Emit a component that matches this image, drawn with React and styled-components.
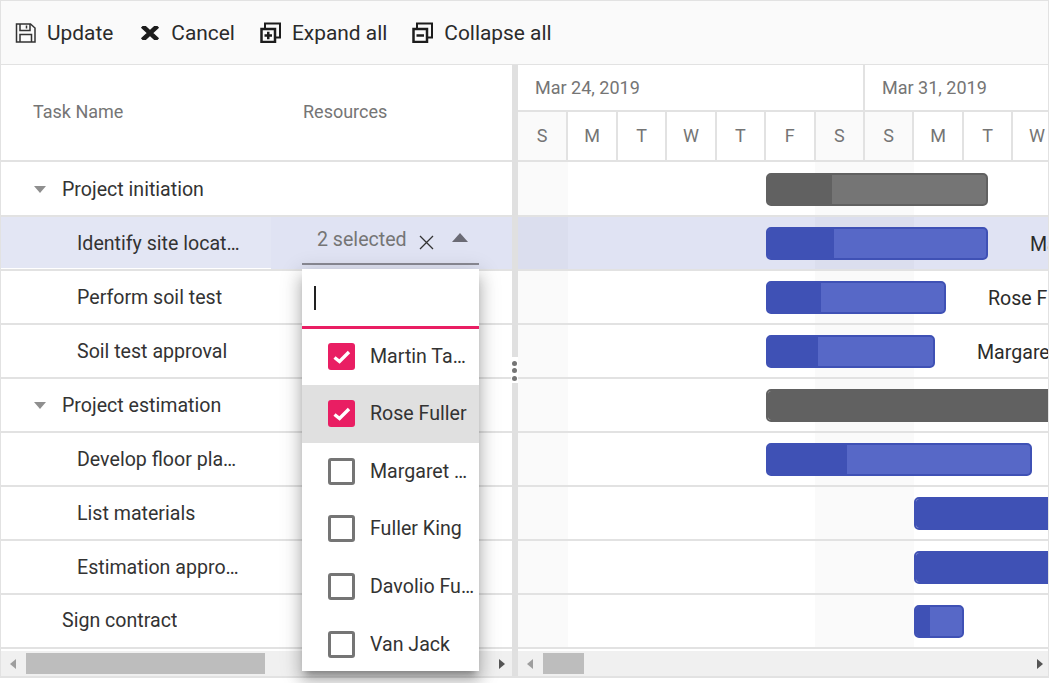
import React from 'react';
import styled, { createGlobalStyle } from 'styled-components';

const GlobalStyle = createGlobalStyle`
  body {
    margin: 0;
    background: #ffffff;
    font-family: Roboto, "Liberation Sans", sans-serif;
  }
`;

const LINE = '#e2e2e2';
const DAY_WIDTH = 49.43;

const Page = styled.div`
  min-height: 683px;
`;

const Gantt = styled.div`
  position: relative;
  box-sizing: border-box;
  width: 1049px;
  height: 678px;
  border: solid 1px ${LINE};
  border-bottom-width: 2px;
  color: #333333;
`;

const Toolbar = styled.div`
  display: flex;
  align-items: center;
  box-sizing: border-box;
  height: 64px;
  background: #fafafa;
  border-bottom: solid 1px ${LINE};
`;

const ToolButton = styled.div`
  display: flex;
  align-items: center;
  margin-left: ${(p) => p.$left}px;
  font-size: 20.9px;
  color: #2b2b2b;
  svg {
    flex: none;
    margin-right: ${(p) => p.$gap}px;
  }
`;

const Panes = styled.div`
  display: flex;
  height: 611px;
`;

const LeftPane = styled.div`
  flex: none;
  display: flex;
  flex-direction: column;
  width: 511px;
`;

const Splitter = styled.div`
  position: relative;
  flex: none;
  width: 6px;
  background: #e0e0e0;
`;

const SplitHandle = styled.div`
  position: absolute;
  left: -1px;
  top: 292px;
  display: flex;
  flex-direction: column;
  align-items: center;
  justify-content: space-between;
  box-sizing: border-box;
  width: 7px;
  height: 26px;
  padding: 3.5px 0 2.5px;
  background: #ffffff;
  span {
    width: 5px;
    height: 5px;
    border-radius: 50%;
    background: #757575;
  }
`;

const RightPane = styled.div`
  flex: 1;
  min-width: 0;
  display: flex;
  flex-direction: column;
  overflow: hidden;
`;

const GridHeader = styled.div`
  display: flex;
  align-items: center;
  box-sizing: border-box;
  height: 97px;
  padding-bottom: 3px;
  border-bottom: solid 2px ${LINE};
  font-size: 18px;
  color: #757575;
`;

const HeaderCell = styled.div`
  flex: none;
  box-sizing: border-box;
  width: ${(p) => p.$width}px;
  padding-left: ${(p) => p.$pad}px;
`;

const Row = styled.div`
  display: flex;
  align-items: center;
  box-sizing: border-box;
  height: 54px;
  border-bottom: solid 2px ${LINE};
  &:first-child {
    height: 55px;
    padding-top: 1px;
  }
`;

const TaskCell = styled.div`
  flex: none;
  display: flex;
  align-items: center;
  box-sizing: border-box;
  width: 270px;
  height: 100%;
  padding: 0 30px ${(p) => (p.$last ? 1 : 0)}px ${(p) => p.$indent}px;
  font-size: 19.6px;
  background: ${(p) => (p.$selected ? '#e3e6f4' : 'transparent')};
  box-shadow: ${(p) => (p.$selected ? 'inset 0 -1px 0 #ffffff' : 'none')};
`;

const TaskText = styled.span`
  overflow: hidden;
  white-space: nowrap;
  text-overflow: ellipsis;
`;

const ExpandArrow = styled.span`
  flex: none;
  width: 0;
  height: 0;
  margin-right: 16px;
  border-style: solid;
  border-width: 7px 6.5px 0 6.5px;
  border-color: #8f8f8f transparent transparent transparent;
`;

const ResourceCell = styled.div`
  flex: 1;
  height: 100%;
  padding-left: 31px;
  background: ${(p) => (p.$selected ? '#e0e3f3' : 'transparent')};
`;

const MultiSelect = styled.div`
  display: flex;
  align-items: center;
  box-sizing: border-box;
  width: 177px;
  height: 48px;
  padding: 0 0 1px 15px;
  border-bottom: solid 2px #8a8a94;
`;

const SelectedText = styled.span`
  flex: none;
  width: 102px;
  font-size: 19.6px;
  color: #757575;
`;

const CaretUp = styled.span`
  width: 0;
  height: 0;
  margin: 0 0 5px 18px;
  border-style: solid;
  border-width: 0 8.5px 9px 8.5px;
  border-color: transparent transparent #6b6b75 transparent;
`;

const Popup = styled.div`
  position: absolute;
  left: 301px;
  top: 268px;
  z-index: 2;
  width: 177px;
  height: 402px;
  background: #ffffff;
  box-shadow: 0 7px 7px -4px rgba(0, 0, 0, 0.28), 0 11px 14px 1px rgba(0, 0, 0, 0.18),
    0 4px 20px 3px rgba(0, 0, 0, 0.14);
`;

const SearchBox = styled.div`
  display: flex;
  align-items: center;
  box-sizing: border-box;
  height: 60px;
  padding: 0 0 0 12px;
  border-bottom: solid 3px #e91e63;
`;

const TextCaret = styled.span`
  width: 2px;
  height: 24px;
  background: #222222;
`;

const OptionList = styled.div`
  height: 342px;
  overflow: hidden;
`;

const Option = styled.div`
  display: flex;
  align-items: center;
  box-sizing: border-box;
  height: 57.6px;
  padding: 0 5px 0 26px;
  font-size: 19.6px;
  background: ${(p) => (p.$active ? '#e0e0e0' : 'transparent')};
  &:first-child {
    height: 56px;
    padding-bottom: 1px;
  }
`;

const CheckBox = styled.span`
  flex: none;
  display: flex;
  align-items: center;
  justify-content: center;
  box-sizing: border-box;
  width: 27px;
  height: 27px;
  margin-right: 15px;
  border-radius: 3px;
  border: solid ${(p) => (p.$checked ? '0' : '3px')} #757575;
  background: ${(p) => (p.$checked ? '#e91e63' : '#ffffff')};
`;

const DateTier = styled.div`
  display: flex;
  flex: none;
  height: 47px;
  border-bottom: solid 2px ${LINE};
  box-sizing: border-box;
`;

const DateCell = styled.div`
  flex: none;
  display: flex;
  align-items: center;
  box-sizing: border-box;
  width: ${(p) => p.$days * DAY_WIDTH + 1}px;
  padding: 0 0 1px 17px;
  border-right: solid 2px ${LINE};
  font-size: 18px;
  color: #757575;
`;

const DayTier = styled.div`
  display: flex;
  flex: none;
  height: 50px;
  border-bottom: solid 2px ${LINE};
  box-sizing: border-box;
`;

const DayCell = styled.div`
  flex: none;
  display: flex;
  align-items: center;
  justify-content: center;
  box-sizing: border-box;
  width: ${DAY_WIDTH}px;
  padding-bottom: 2px;
  border-right: solid 2px ${LINE};
  font-size: 18px;
  color: #757575;
  background: ${(p) => (p.$weekend ? '#fafafa' : '#ffffff')};
  &:first-child {
    width: ${DAY_WIDTH + 1}px;
  }
`;

const ChartBody = styled.div`
  background: linear-gradient(
    to right,
    #fafafa 0 50px,
    #ffffff 50px 297px,
    #fafafa 297px 396px,
    #ffffff 396px
  );
`;

const ChartRow = styled(Row)`
  background: ${(p) => (p.$selected ? 'rgba(63, 81, 181, 0.16)' : 'transparent')};
  white-space: nowrap;
`;

const Bar = styled.div`
  flex: none;
  box-sizing: border-box;
  width: ${(p) => p.$width}px;
  height: 33px;
  margin-left: ${(p) => p.$left}px;
  overflow: hidden;
  border: solid 2px ${(p) => (p.$parent ? '#616161' : '#3f51b5')};
  border-radius: 5px;
  background: ${(p) => (p.$parent ? '#757575' : '#5768c7')};
`;

const Progress = styled.div`
  height: 100%;
  background: ${(p) => (p.$parent ? '#616161' : '#3f51b5')};
`;

const BarLabel = styled.span`
  flex: none;
  margin: 2px 0 0 42px;
  font-size: 19.6px;
  color: #2b2b2b;
`;

const ScrollGap = styled.div`
  flex: none;
  height: 2px;
`;

const ScrollBar = styled.div`
  flex: none;
  display: flex;
  align-items: center;
  height: 25px;
  background: #f0f0f0;
`;

const ScrollArrow = styled.span`
  flex: none;
  width: 0;
  height: 0;
  border-style: solid;
  border-width: ${(p) => (p.$right ? '5.5px 0 5.5px 6px' : '5.5px 6px 5.5px 0')};
  border-color: ${(p) =>
    p.$right
      ? `transparent transparent transparent ${p.$dim ? '#9e9e9e' : '#555555'}`
      : `transparent ${p.$dim ? '#9e9e9e' : '#555555'} transparent transparent`};
  margin: ${(p) => p.$margin};
`;

const ScrollThumb = styled.div`
  flex: none;
  width: ${(p) => p.$width}px;
  height: 21px;
  background: #bdbdbd;
`;

const ScrollSpacer = styled.div`
  flex: 1;
`;

const FloppyIcon = () => (
  <svg width="21" height="21" viewBox="0 0 21 21" fill="none" stroke="#333333" strokeWidth="1.5">
    <path d="M1.5 2 H15.5 L20 6 V20 H1.5 Z" />
    <path d="M5 2 V8.5 H15 V2" />
    <path d="M11.5 3.5 V6.5" />
    <path d="M5 20 V12.5 H16.5 V20" />
  </svg>
);

const BoldCross = () => (
  <svg width="20" height="14" viewBox="0 0 20 14" fill="none" stroke="#1c1c1c" strokeWidth="4.6">
    <path d="M2.5 0 L17.5 14 M17.5 0 L2.5 14" />
  </svg>
);

const LayersIcon = ({ plus }) => (
  <svg width="21" height="21" viewBox="0 0 21 21" fill="none" stroke="#1c1c1c" strokeWidth="2.5">
    <path d="M5 6 V1.5 H20 V15.5 H16" strokeWidth="2" />
    <rect x="1.5" y="7" width="13.5" height="13" />
    <path d={plus ? 'M4.5 13.5 H12 M8.25 9.8 V17.2' : 'M4.5 13.5 H12'} />
  </svg>
);

const ThinCross = () => (
  <svg width="15" height="15" viewBox="0 0 15 15" fill="none" stroke="#333333" strokeWidth="1.3" style={{ marginTop: 5, flex: 'none' }}>
    <path d="M1 1 L14 14 M14 1 L1 14" />
  </svg>
);

const CheckMark = () => (
  <svg width="18" height="14" viewBox="0 0 18 14" fill="none" stroke="#ffffff" strokeWidth="3.4">
    <path d="M1.5 7.5 L6.5 11.5 L16 2" />
  </svg>
);

const tasks = [
  { name: 'Project initiation', parent: true, left: 248, width: 222, done: 64 },
  { name: 'Identify site location', left: 248, width: 222, done: 66, label: 'Martin Tamer', selected: true },
  { name: 'Perform soil test', left: 248, width: 180, done: 53, label: 'Rose Fuller' },
  { name: 'Soil test approval', left: 248, width: 169, done: 50, label: 'Margaret Buchanan' },
  { name: 'Project estimation', parent: true, left: 248, width: 400, done: 400 },
  { name: 'Develop floor plan for estimation', left: 248, width: 266, done: 79 },
  { name: 'List materials', left: 396, width: 300, done: 300 },
  { name: 'Estimation approval', left: 396, width: 300, done: 300 },
  { name: 'Sign contract', top: true, left: 396, width: 50, done: 14 },
];

const days = ['S', 'M', 'T', 'W', 'T', 'F', 'S', 'S', 'M', 'T', 'W'];

const options = [
  { name: 'Martin Tamer', checked: true },
  { name: 'Rose Fuller', checked: true, active: true },
  { name: 'Margaret Buchanan' },
  { name: 'Fuller King' },
  { name: 'Davolio Fuller' },
  { name: 'Van Jack' },
];

export default function App() {
  return (
    <Page>
      <GlobalStyle />
      <Gantt>
        <Toolbar>
          <ToolButton $left={14} $gap={11}>
            <FloppyIcon />
            Update
          </ToolButton>
          <ToolButton $left={27} $gap={11}>
            <BoldCross />
            Cancel
          </ToolButton>
          <ToolButton $left={25} $gap={11}>
            <LayersIcon plus />
            Expand all
          </ToolButton>
          <ToolButton $left={25} $gap={11}>
            <LayersIcon />
            Collapse all
          </ToolButton>
        </Toolbar>
        <Panes>
          <LeftPane>
            <GridHeader>
              <HeaderCell $width={270} $pad={32}>
                Task Name
              </HeaderCell>
              <HeaderCell $width={241} $pad={32}>
                Resources
              </HeaderCell>
            </GridHeader>
            <div>
              {tasks.map((task) => (
                <Row key={task.name}>
                  <TaskCell
                    $indent={task.parent ? 33 : task.top ? 61 : 76}
                    $selected={task.selected}
                    $last={task.top}
                  >
                    {task.parent && <ExpandArrow />}
                    <TaskText>{task.name}</TaskText>
                  </TaskCell>
                  <ResourceCell $selected={task.selected}>
                    {task.selected && (
                      <MultiSelect>
                        <SelectedText>2 selected</SelectedText>
                        <ThinCross />
                        <CaretUp />
                      </MultiSelect>
                    )}
                  </ResourceCell>
                </Row>
              ))}
            </div>
            <ScrollGap />
            <ScrollBar>
              <ScrollArrow $dim $margin="0 10px 0 9px" />
              <ScrollThumb $width={239} />
              <ScrollSpacer />
              <ScrollArrow $right $margin="0 7px 0 0" />
            </ScrollBar>
          </LeftPane>
          <Splitter>
            <SplitHandle>
              <span />
              <span />
              <span />
            </SplitHandle>
          </Splitter>
          <RightPane>
            <DateTier>
              <DateCell $days={7}>Mar 24, 2019</DateCell>
              <DateCell $days={7}>Mar 31, 2019</DateCell>
            </DateTier>
            <DayTier>
              {days.map((day, i) => (
                <DayCell key={i} $weekend={i === 0 || i === 6 || i === 7}>
                  {day}
                </DayCell>
              ))}
            </DayTier>
            <ChartBody>
              {tasks.map((task) => (
                <ChartRow key={task.name} $selected={task.selected}>
                  <Bar $left={task.left} $width={task.width} $parent={task.parent}>
                    <Progress $parent={task.parent} style={{ width: task.done }} />
                  </Bar>
                  {task.label && <BarLabel>{task.label}</BarLabel>}
                </ChartRow>
              ))}
            </ChartBody>
            <ScrollGap />
            <ScrollBar>
              <ScrollArrow $dim $margin="0 10px 0 9px" />
              <ScrollThumb $width={41} />
              <ScrollSpacer />
              <ScrollArrow $right $margin="0 5px 0 0" />
            </ScrollBar>
          </RightPane>
        </Panes>
        <Popup>
          <SearchBox>
            <TextCaret />
          </SearchBox>
          <OptionList>
            {options.map((option) => (
              <Option key={option.name} $active={option.active}>
                <CheckBox $checked={option.checked}>{option.checked && <CheckMark />}</CheckBox>
                <TaskText>{option.name}</TaskText>
              </Option>
            ))}
          </OptionList>
        </Popup>
      </Gantt>
    </Page>
  );
}
